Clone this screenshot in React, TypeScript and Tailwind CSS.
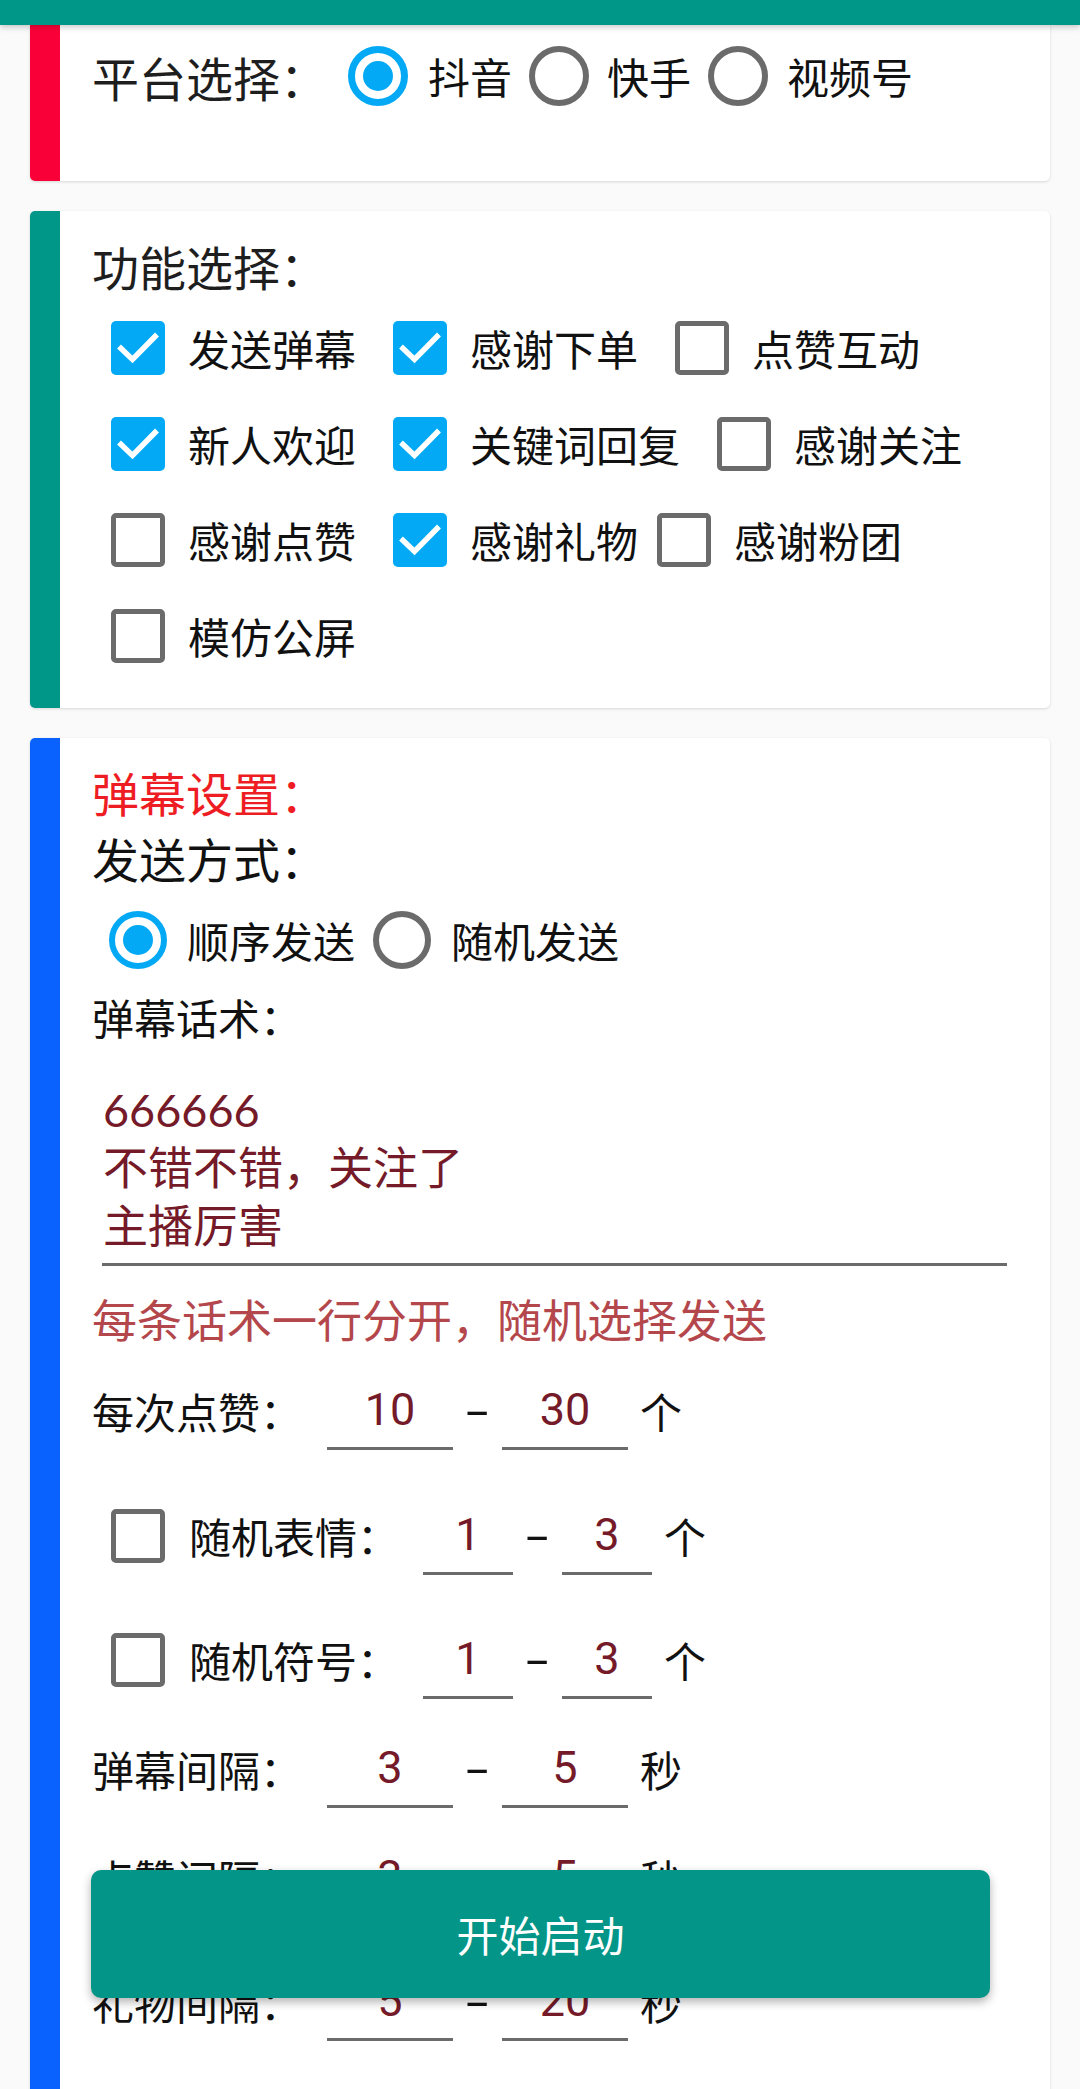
import React from "react";

const CJK = "font-['Noto_Sans_CJK_SC',sans-serif]";

function Check({ checked }: { checked: boolean }) {
  if (checked) {
    return (
      <div className="w-[54px] h-[54px] rounded-[5px] bg-[#03a9f4] shrink-0">
        <svg width="54" height="54" viewBox="0 0 54 54">
          <polyline points="8,25.5 21.5,38.5 46,13.5" fill="none" stroke="#ffffff" strokeWidth="5.5" />
        </svg>
      </div>
    );
  }
  return <div className="w-[54px] h-[54px] rounded-[5px] border-[5px] border-[#6b6b6b] shrink-0 box-border" />;
}

function RadioBig({ checked }: { checked: boolean }) {
  return checked ? (
    <div className="w-[60px] h-[60px] rounded-full border-[7px] border-[#03a9f4] shrink-0 flex items-center justify-center box-border">
      <div className="w-[30px] h-[30px] rounded-full bg-[#03a9f4]" />
    </div>
  ) : (
    <div className="w-[60px] h-[60px] rounded-full border-[6px] border-[#6b6b6b] shrink-0 box-border" />
  );
}

function RadioSmall({ checked }: { checked: boolean }) {
  return checked ? (
    <div className="w-[58px] h-[58px] rounded-full border-[6px] border-[#03a9f4] shrink-0 flex items-center justify-center box-border">
      <div className="w-[30px] h-[30px] rounded-full bg-[#03a9f4]" />
    </div>
  ) : (
    <div className="w-[58px] h-[58px] rounded-full border-[6px] border-[#6b6b6b] shrink-0 box-border" />
  );
}

function CheckItem({ label, checked, tight }: { label: string; checked: boolean; tight?: boolean }) {
  return (
    <div className={`flex items-center h-[54px] ml-[19px] ${tight ? "mr-0" : "mr-[18px]"}`}>
      <Check checked={checked} />
      <span className="ml-[23px] text-[42px] leading-[54px] text-[#111111] whitespace-nowrap">{label}</span>
    </div>
  );
}

function NumInput({ value, wide }: { value: string; wide: boolean }) {
  return (
    <div
      className={`${wide ? "w-[126px]" : "w-[90px]"} h-[78px] border-b-[3px] border-[#6b6b6b] text-center text-[45px] leading-[75px] text-[#751a28] font-['Roboto','Noto_Sans_CJK_SC',sans-serif] shrink-0 box-border`}
    >
      {value}
    </div>
  );
}

function Dash() {
  return (
    <div className="w-[49px] text-center shrink-0 text-[45px] leading-[75px] text-[#111111] font-['Roboto',sans-serif]">
      <span className="inline-block scale-x-[1.8]">-</span>
    </div>
  );
}

function RangeRow({
  label,
  a,
  b,
  unit,
  mt,
}: {
  label: string;
  a: string;
  b: string;
  unit: string;
  mt: string;
}) {
  return (
    <div className={`flex items-center h-[78px] ${mt}`}>
      <span className="text-[42px] leading-[42px] text-[#111111] w-[210px] whitespace-nowrap">{label}</span>
      <div className="ml-[25px]" />
      <NumInput value={a} wide={true} />
      <Dash />
      <NumInput value={b} wide={true} />
      <span className="ml-[12px] text-[42px] leading-[42px] text-[#111111]">{unit}</span>
    </div>
  );
}

function CheckRangeRow({
  label,
  a,
  b,
  unit,
  mt,
}: {
  label: string;
  a: string;
  b: string;
  unit: string;
  mt: string;
}) {
  return (
    <div className={`flex items-center h-[78px] ${mt}`}>
      <div className="ml-[19px]" />
      <Check checked={false} />
      <span className="ml-[24px] text-[42px] leading-[42px] text-[#111111] w-[210px] whitespace-nowrap">{label}</span>
      <div className="ml-[24px]" />
      <NumInput value={a} wide={false} />
      <Dash />
      <NumInput value={b} wide={false} />
      <span className="ml-[12px] text-[42px] leading-[42px] text-[#111111]">{unit}</span>
    </div>
  );
}

export default function App() {
  return (
    <div className={`relative w-[1080px] h-[2089px] overflow-hidden bg-[#fafafa] ${CJK}`}>
      <div className="relative z-10 h-[25px] bg-[#009688] shadow-[0_2px_6px_rgba(0,0,0,0.22)]" />

      <div className="px-[30px]">
        {/* Card 1 */}
        <div className="flex bg-white rounded-b-[5px] overflow-hidden shadow-[0_1px_3px_rgba(0,0,0,0.14)]">
          <div className="w-[30px] shrink-0 bg-[#fa0038]" />
          <div className="flex-1 pl-[32px] pt-[21px] pb-[75px]">
            <div className="flex items-center h-[60px]">
              <span className="text-[47px] leading-[47px] text-[#1e1e1e] whitespace-nowrap">平台选择：</span>
              <div className="flex items-center ml-[21px]">
                <RadioBig checked={true} />
                <span className="ml-[20px] text-[42px] leading-[42px] text-[#111111]">抖音</span>
              </div>
              <div className="flex items-center ml-[17px]">
                <RadioBig checked={false} />
                <span className="ml-[18px] text-[42px] leading-[42px] text-[#111111]">快手</span>
              </div>
              <div className="flex items-center ml-[17px]">
                <RadioBig checked={false} />
                <span className="ml-[19px] text-[42px] leading-[42px] text-[#111111]">视频号</span>
              </div>
            </div>
          </div>
        </div>

        {/* Card 2 */}
        <div className="mt-[30px] flex bg-white rounded-[5px] overflow-hidden shadow-[0_1px_3px_rgba(0,0,0,0.14)]">
          <div className="w-[30px] shrink-0 bg-[#009688]" />
          <div className="flex-1 pl-[32px] pr-[20px] pt-[31px] pb-[45px]">
            <div className="text-[47px] leading-[47px] text-[#1e1e1e]">功能选择：</div>
            <div className="mt-[32px] flex flex-wrap gap-y-[42px]">
              <CheckItem label="发送弹幕" checked={true} />
              <CheckItem label="感谢下单" checked={true} />
              <CheckItem label="点赞互动" checked={false} />
              <CheckItem label="新人欢迎" checked={true} />
              <CheckItem label="关键词回复" checked={true} />
              <CheckItem label="感谢关注" checked={false} />
              <CheckItem label="感谢点赞" checked={false} />
              <CheckItem label="感谢礼物" checked={true} tight={true} />
              <CheckItem label="感谢粉团" checked={false} />
              <CheckItem label="模仿公屏" checked={false} />
            </div>
          </div>
        </div>

        {/* Card 3 */}
        <div className="mt-[30px] flex bg-white rounded-[5px] overflow-hidden shadow-[0_1px_3px_rgba(0,0,0,0.14)]">
          <div className="w-[30px] shrink-0 bg-[#0961fe]" />
          <div className="flex-1 pl-[32px] pr-[20px] pt-[30px] pb-[80px]">
            <div className="text-[47px] leading-[47px] text-[#ee1d23]">弹幕设置：</div>
            <div className="mt-[19px] text-[47px] leading-[47px] text-[#111111]">发送方式：</div>
            <div className="mt-[30px] flex items-center h-[58px]">
              <div className="flex items-center ml-[17px]">
                <RadioSmall checked={true} />
                <span className="ml-[20px] text-[42px] leading-[42px] text-[#111111]">顺序发送</span>
              </div>
              <div className="flex items-center ml-[18px]">
                <RadioSmall checked={false} />
                <span className="ml-[20px] text-[42px] leading-[42px] text-[#111111]">随机发送</span>
              </div>
            </div>
            <div className="mt-[27px] text-[42px] leading-[42px] text-[#111111]">弹幕话术：</div>
            <div className="mt-[43px] ml-[10px] w-[905px] border-b-[3px] border-[#6b6b6b] pb-[8px] pl-[1px] text-[45px] leading-[58px] text-[#751a28] font-['Lato','Noto_Sans_CJK_SC',sans-serif]">
              <div>666666</div>
              <div>不错不错，关注了</div>
              <div>主播厉害</div>
            </div>
            <div className="mt-[30px] text-[45px] leading-[45px] text-[#b4474c] whitespace-nowrap">
              每条话术一行分开，随机选择发送
            </div>
            <RangeRow label="每次点赞：" a="10" b="30" unit="个" mt="mt-[31px]" />
            <CheckRangeRow label="随机表情：" a="1" b="3" unit="个" mt="mt-[47px]" />
            <CheckRangeRow label="随机符号：" a="1" b="3" unit="个" mt="mt-[46px]" />
            <RangeRow label="弹幕间隔：" a="3" b="5" unit="秒" mt="mt-[31px]" />
            <RangeRow label="点赞间隔：" a="3" b="5" unit="秒" mt="mt-[31px]" />
            <RangeRow label="礼物间隔：" a="5" b="20" unit="秒" mt="mt-[46px]" />
          </div>
        </div>
      </div>

      <button className="absolute left-[91px] top-[1870px] w-[899px] h-[128px] rounded-[10px] bg-[#039688] shadow-[0_4px_10px_rgba(0,0,0,0.3)] text-white text-[42px] leading-[42px] flex items-center justify-center">
        开始启动
      </button>
    </div>
  );
}
